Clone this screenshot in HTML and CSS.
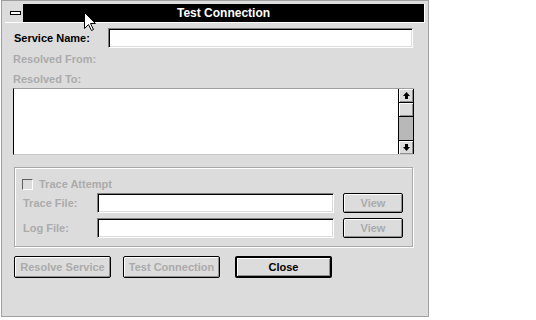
FILE: index.html
```html
<!DOCTYPE html>
<html lang="en">

<head>
    <meta charset="UTF-8">
    <title>Test Connection</title>
    <link rel="stylesheet" href="styles.css">
</head>

<body>
    <div class="dialog">
        <div class="titlebar">
            <div class="sysmenu"><span class="dash"></span></div>
            <div class="title">Test Connection</div>
        </div>
        <div class="client">
            <div class="row-name">
                <span class="lbl name-lbl">Service Name:</span>
                <div class="field name-field"></div>
            </div>
            <div class="lbl dis resolved-from">Resolved From:</div>
            <div class="lbl dis resolved-to">Resolved To:</div>
            <div class="list">
                <div class="list-body"></div>
                <div class="scroll">
                    <div class="sbtn sbtn-up">
                        <svg width="7" height="7" viewBox="0 0 7 7"><path d="M3.5 0 L7 4 L5 4 L5 7 L2 7 L2 4 L0 4 Z" fill="#000"/></svg>
                    </div>
                    <div class="thumb"></div>
                    <div class="track"></div>
                    <div class="sbtn sbtn-down">
                        <svg width="7" height="7" viewBox="0 0 7 7"><path d="M3.5 7 L7 3 L5 3 L5 0 L2 0 L2 3 L0 3 Z" fill="#000"/></svg>
                    </div>
                </div>
            </div>
            <div class="group">
                <div class="check-row">
                    <span class="checkbox"></span>
                    <span class="lbl dis">Trace Attempt</span>
                </div>
                <div class="file-row trace-row">
                    <span class="lbl dis file-lbl">Trace File:</span>
                    <div class="field file-field"></div>
                    <div class="btn view-btn dis">View</div>
                </div>
                <div class="file-row log-row">
                    <span class="lbl dis file-lbl">Log File:</span>
                    <div class="field file-field"></div>
                    <div class="btn view-btn dis">View</div>
                </div>
            </div>
            <div class="buttons">
                <div class="btn btn-resolve dis">Resolve Service</div>
                <div class="btn btn-test dis">Test Connection</div>
                <div class="btn btn-close">Close</div>
            </div>
        </div>
        <svg class="cursor" width="13" height="20" viewBox="0 0 13 20">
            <path d="M0.5 0.5 L0.5 16.5 L4.5 12.5 L7.5 18.5 L9.5 17.5 L6.5 11.5 L11.5 11.5 Z" fill="#fff" stroke="#000" stroke-width="1"/>
        </svg>
    </div>
</body>

</html>
```

FILE: styles.css
```css
* {
    margin: 0;
    padding: 0;
    box-sizing: border-box;
}

body {
    background: #fff;
    font-family: "Liberation Sans", Arial, sans-serif;
    font-size: 11px;
    font-weight: bold;
    color: #000;
}

.dialog {
    position: relative;
    margin-left: 1px;
    width: 428px;
    height: 317px;
    background: #dcdcdc;
    border: 1px solid #a0a0a0;
    padding: 3px;
}

/* title bar */
.titlebar {
    display: flex;
    height: 19px;
    border-bottom: 1px solid #fff;
}

.sysmenu {
    width: 18px;
    background: #dcdcdc;
    display: flex;
    align-items: center;
    justify-content: center;
    padding-left: 2px;
}

.dash {
    width: 11px;
    height: 4px;
    background: #fff;
    border: 1px solid #000;
}

.title {
    flex: 1;
    background: #000;
    color: #fff;
    text-align: center;
    font-size: 12px;
    line-height: 18px;
    border-right: 1px solid #fff;
}

/* client */
.client {
    padding: 0 11px 0 8px;
}

.lbl {
    line-height: 14px;
    white-space: nowrap;
}

.dis {
    color: #ababab;
}

.row-name {
    display: flex;
    align-items: center;
    margin-top: 5px;
    height: 20px;
}

.name-lbl {
    width: 95px;
    padding-left: 1px;
}

.field {
    height: 20px;
    background: #fff;
    border: 1px solid;
    border-color: #808080 #fff #fff #808080;
    box-shadow: inset 1px 1px 0 #000, inset -1px -1px 0 #dcdcdc;
}

.name-field {
    width: 305px;
}

.resolved-from {
    margin-top: 4px;
}

.resolved-to {
    margin-top: 6px;
}

/* list with scrollbar */
.list {
    display: flex;
    margin-top: 2px;
    height: 67px;
    background: #fff;
    border-top: 1px solid #a0a0a0;
    border-left: 1px solid #000;
    border-bottom: 1px solid #c8c8c8;
}

.list-body {
    flex: 1;
}

.scroll {
    width: 16px;
    display: flex;
    flex-direction: column;
    border-left: 1px solid #000;
    border-right: 1px solid #000;
}

.sbtn {
    height: 14px;
    display: flex;
    align-items: center;
    justify-content: center;
    background: #dcdcdc;
    box-shadow: inset 1px 1px 0 #fff, inset -1px -1px 0 #909090;
}

.sbtn-up {
    border-bottom: 1px solid #000;
}

.sbtn-down {
    border-top: 1px solid #000;
}

.thumb {
    height: 14px;
    background: #dcdcdc;
    border-bottom: 1px solid #000;
    box-shadow: inset 1px 1px 0 #fff, inset -1px -1px 0 #909090;
}

.track {
    flex: 1;
    background: #b8b8b8;
}

/* group box */
.group {
    margin: 12px 0 0 1px;
    width: 399px;
    height: 80px;
    border: 1px solid #a8a8a8;
    box-shadow: 1px 1px 0 #fff, inset 1px 1px 0 #fff;
    padding: 10px 0 0 8px;
}

.check-row {
    display: flex;
    align-items: center;
    height: 12px;
}

.checkbox {
    width: 11px;
    height: 11px;
    margin-left: -1px;
    margin-right: 6px;
    border: 1px solid;
    border-color: #606060 #fff #fff #606060;
}

.file-row {
    display: flex;
    align-items: center;
    height: 20px;
}

.trace-row {
    margin-top: 3px;
}

.log-row {
    margin-top: 5px;
}

.file-lbl {
    width: 74px;
}

.file-field {
    width: 237px;
}

/* buttons */
.btn {
    display: flex;
    align-items: center;
    justify-content: center;
    background: #dcdcdc;
    border: 1px solid #000;
    border-radius: 2px;
    box-shadow: inset 1px 1px 0 #fff, inset -1px -1px 0 #909090;
    white-space: nowrap;
}

.view-btn {
    width: 60px;
    height: 20px;
    margin-left: 9px;
}

.buttons {
    display: flex;
    margin: 9px 0 0 1px;
}

.buttons .btn {
    height: 22px;
    width: 97px;
}

.btn-test {
    margin-left: 12px;
}

.btn-close {
    margin-left: 15px;
    border-width: 2px;
}

.cursor {
    position: absolute;
    left: 82px;
    top: 11px;
}
```
